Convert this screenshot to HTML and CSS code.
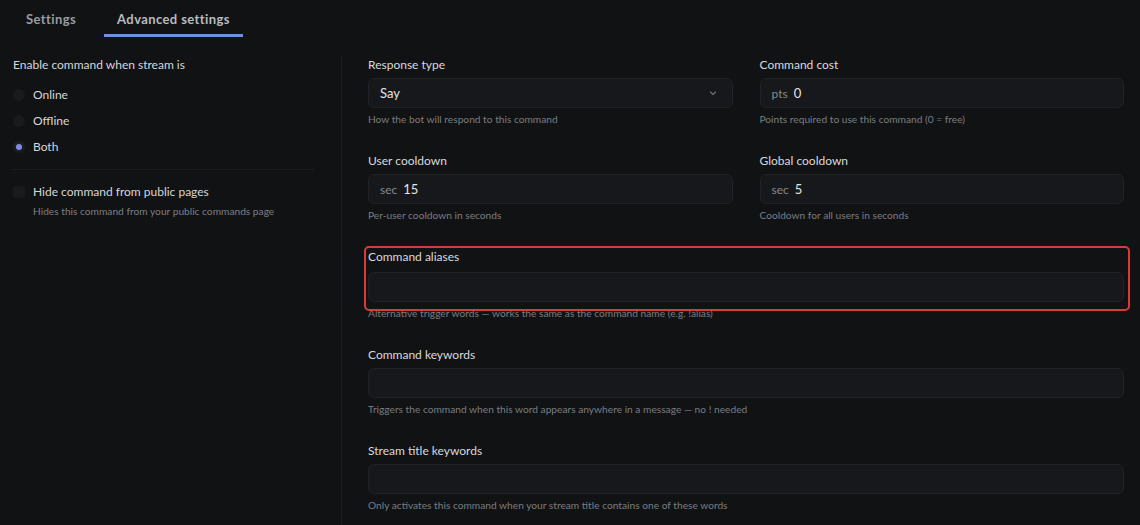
FILE: index.html
```html
<!DOCTYPE html>
<html lang="en">

<head>
  <meta charset="UTF-8">
  <meta name="viewport" content="width=device-width, initial-scale=1.0">
  <title>Advanced settings</title>
  <link rel="stylesheet" href="styles.css">
</head>

<body>
  <div class="tabs">
    <div class="tab">Settings</div>
    <div class="tab active">Advanced settings</div>
  </div>

  <div class="main">
    <div class="side">
      <div class="side-title">Enable command when stream is</div>
      <div class="radios">
        <div class="radio-row"><span class="radio"></span>Online</div>
        <div class="radio-row"><span class="radio"></span>Offline</div>
        <div class="radio-row"><span class="radio checked"></span>Both</div>
      </div>
      <div class="sep"></div>
      <div class="check-row"><span class="checkbox"></span>Hide command from public pages</div>
      <div class="check-desc">Hides this command from your public commands page</div>
    </div>

    <div class="fields">
      <div class="field">
        <div class="label">Response type</div>
        <div class="input select">
          <span class="value">Say</span>
          <svg class="chev" width="10" height="10" viewBox="0 0 10 10">
            <path d="M2.5 4 L5 6.5 L7.5 4" fill="none" stroke="#6b6e74" stroke-width="1.2" stroke-linecap="round" stroke-linejoin="round" />
          </svg>
        </div>
        <div class="desc">How the bot will respond to this command</div>
      </div>
      <div class="field">
        <div class="label">Command cost</div>
        <div class="input"><span class="prefix">pts</span><span class="value">0</span></div>
        <div class="desc">Points required to use this command (0 = free)</div>
      </div>
      <div class="field">
        <div class="label">User cooldown</div>
        <div class="input"><span class="prefix">sec</span><span class="value">15</span></div>
        <div class="desc">Per-user cooldown in seconds</div>
      </div>
      <div class="field">
        <div class="label">Global cooldown</div>
        <div class="input"><span class="prefix">sec</span><span class="value">5</span></div>
        <div class="desc">Cooldown for all users in seconds</div>
      </div>
      <div class="field wide marked">
        <div class="label">Command aliases</div>
        <div class="input"></div>
        <div class="desc">Alternative trigger words — works the same as the command name (e.g. !alias)</div>
      </div>
      <div class="field wide">
        <div class="label">Command keywords</div>
        <div class="input"></div>
        <div class="desc">Triggers the command when this word appears anywhere in a message — no ! needed</div>
      </div>
      <div class="field wide">
        <div class="label">Stream title keywords</div>
        <div class="input"></div>
        <div class="desc">Only activates this command when your stream title contains one of these words</div>
      </div>
    </div>
  </div>
</body>

</html>
```

FILE: styles.css
```css
html,
body {
  margin: 0;
  background-color: #111214;
  color: #d5d7da;
  font-family: Lato, "Noto Sans", sans-serif;
}

.tabs {
  display: flex;
  height: 37px;
  padding-left: 13px;
}

.tab {
  padding: 11px 13px 0;
  font-size: 13px;
  font-weight: 700;
  letter-spacing: 0.4px;
  color: #9a9ca1;
}

.tab.active {
  margin-left: 15px;
  color: #b9bbc0;
  border-bottom: 3px solid #6f8fe0;
  box-sizing: border-box;
}

.main {
  display: grid;
  grid-template-columns: 342px 1fr;
  padding-top: 19px;
}

.side {
  padding: 0 27px 0 13px;
  border-right: 1px solid #1b1c1f;
  min-height: 470px;
}

.side-title {
  font-size: 12px;
  line-height: 18px;
}

.radios {
  display: flex;
  flex-direction: column;
  gap: 8px;
  padding-top: 12px;
}

.radio-row,
.check-row {
  display: flex;
  align-items: center;
  gap: 8px;
  font-size: 12px;
  line-height: 18px;
}

.radio {
  width: 12px;
  height: 12px;
  border-radius: 50%;
  background-color: #191a1d;
  box-sizing: border-box;
}

.radio.checked {
  background-color: #7c8de6;
  border: 3px solid #1b1c24;
}

.sep {
  height: 1px;
  background-color: #1d1e21;
  margin: 13px 0 13px;
}

.checkbox {
  width: 12px;
  height: 12px;
  border-radius: 3px;
  background-color: #191a1d;
}

.check-desc {
  padding-left: 20px;
  margin-top: 4px;
  font-size: 10.2px;
  color: #7c7f84;
}

.fields {
  display: grid;
  grid-template-columns: 1fr 1fr;
  align-content: start;
  column-gap: 27px;
  row-gap: 26px;
  padding: 0 16px 0 26px;
}

.field {
  position: relative;
}

.field.wide {
  grid-column: 1 / 3;
}

.field.marked .label {
  margin-bottom: 6px;
}

.field.marked::after {
  content: "";
  position: absolute;
  top: -2px;
  left: -4px;
  right: -6px;
  height: 65px;
  box-sizing: border-box;
  border: 2.5px solid #d63c3c;
  border-radius: 5px;
}

.label {
  font-size: 12px;
  line-height: 18px;
  margin-bottom: 4px;
  color: #d8dadd;
}

.input {
  display: flex;
  align-items: center;
  height: 30px;
  box-sizing: border-box;
  padding: 0 11px;
  background-color: #16181b;
  border: 1px solid #202226;
  border-radius: 6px;
  font-size: 13px;
}

.prefix {
  color: #86898e;
  font-size: 12px;
  margin-right: 6px;
}

.value {
  color: #e3e4e6;
}

.select .value {
  flex: 1;
}

.chev {
  margin-right: 3px;
}

.desc {
  margin-top: 4px;
  font-size: 10.2px;
  line-height: 14px;
  color: #7a7d82;
}
```
